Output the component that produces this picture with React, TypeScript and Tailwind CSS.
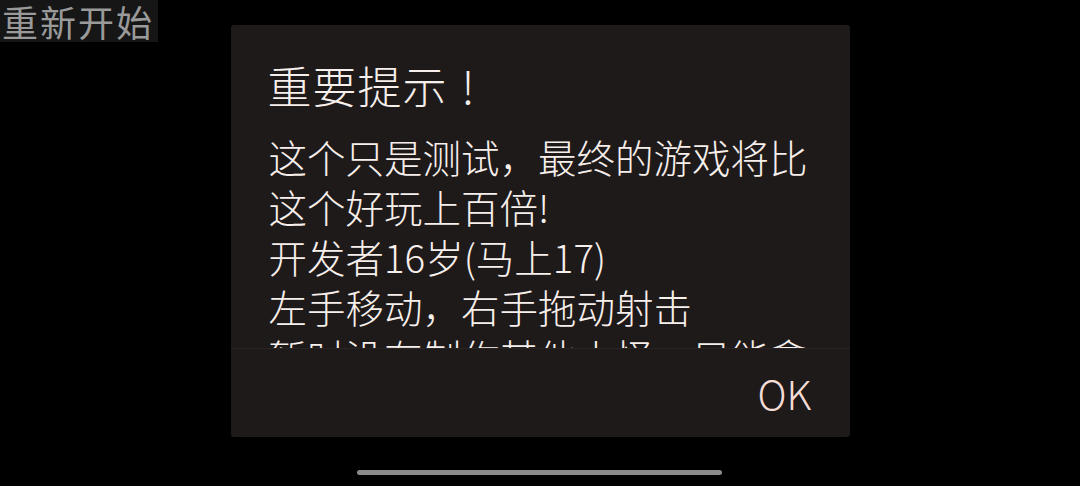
const lines = [
  '这个只是测试，最终的游戏将比',
  '这个好玩上百倍!',
  '开发者16岁(马上17)',
  '左手移动，右手拖动射击',
  '暂时没有制作其他小怪，只能拿',
];

export default function App() {
  return (
    <div
      className="relative w-[1080px] h-[486px] bg-black overflow-hidden flex flex-col items-center"
      style={{ fontFamily: '"Noto Sans CJK SC", "Noto Sans", sans-serif' }}
    >
      {/* game button behind the dialog */}
      <div className="absolute left-0 top-0 h-[42px] pl-[2px] pr-[4px] bg-[#161616] text-[#9a9a9a] text-[36px] leading-[42px] tracking-[2px]">
        重新开始
      </div>

      <div className="relative mt-[25px] w-[619px] h-[412px] rounded-[3px] bg-[#1f1a1a] flex flex-col font-light">
        <div className="pl-[37px] pt-[33px] text-[44px] leading-[54px] tracking-[1px] text-[#f7efeb]">
          重要提示<span className="ml-[14px]">!</span>
        </div>

        <div className="mt-[19px] h-[217px] overflow-hidden pl-[38px] text-[38.5px] leading-[50px] text-[#f7efeb]">
          {lines.map((l, i) => (
            <div key={i} className="whitespace-nowrap">
              {l}
            </div>
          ))}
        </div>

        <div className="h-px bg-[#2a2424]" />

        <div className="flex-1 flex items-center justify-end pr-[38px]">
          <span className="text-[40px] leading-none text-[#f5ddd6]">OK</span>
        </div>
      </div>

      <div className="absolute left-[357px] top-[470px] w-[365px] h-[5px] rounded-full bg-[#8a8a8a]" />
    </div>
  );
}
